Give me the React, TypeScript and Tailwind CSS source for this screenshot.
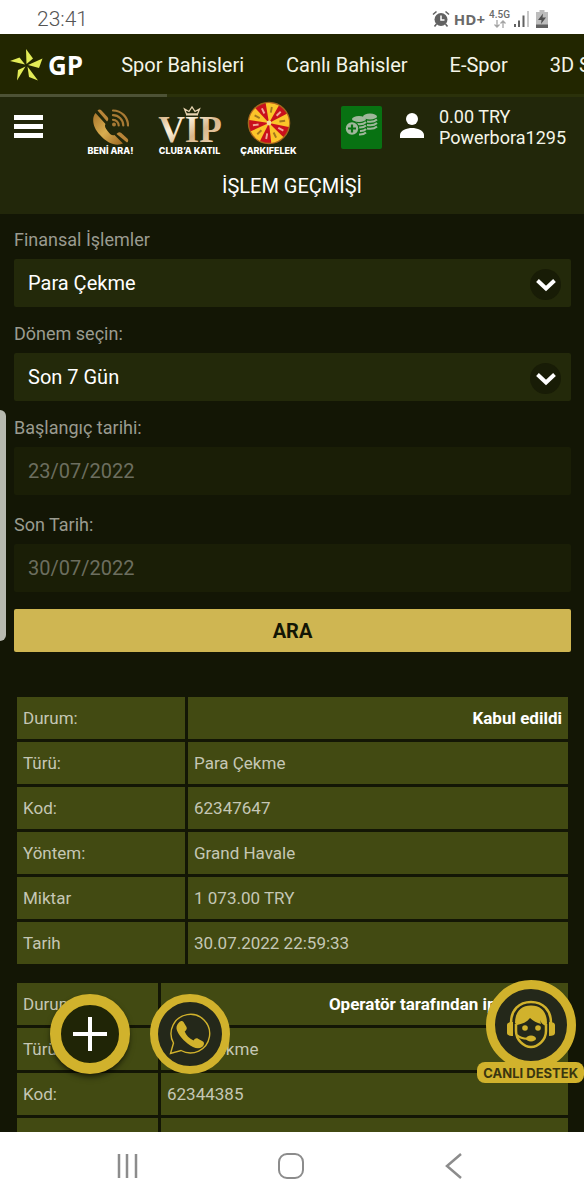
import { useState } from "react";
import type { ReactNode } from "react";

type Row = { label: string; value: string; status?: boolean };

const first: Row[] = [
  { label: "Durum:", value: "Kabul edildi", status: true },
  { label: "Türü:", value: "Para Çekme" },
  { label: "Kod:", value: "62347647" },
  { label: "Yöntem:", value: "Grand Havale" },
  { label: "Miktar", value: "1 073.00 TRY" },
  { label: "Tarih", value: "30.07.2022 22:59:33" },
];

const second: Row[] = [
  { label: "Durum:", value: "Operatör tarafından iptal edildi", status: true },
  { label: "Türü:", value: "Para Çekme" },
  { label: "Kod:", value: "62344385" },
  { label: "Yöntem:", value: "Grand Havale" },
];

const wheel = Array.from({ length: 10 }, (_, i) => i);

function StatusBar() {
  return (
    <div className="flex h-[34px] shrink-0 items-center bg-white pt-1 pr-9 pl-[37px] text-[#6a6a6a]">
      <span className="text-[21px] leading-6 font-light text-[#555]">23:41</span>
      <div className="ml-auto flex items-center">
        <svg width="18" height="18" viewBox="0 0 18 18" fill="none" stroke="#626262">
          <circle cx="9" cy="9.500" r="6.500" fill="#626262" stroke="none" />
          <path d="M1 4.500 4.500 1.500M17 4.500l-3.500-3M4.500 14 2.500 16.500M13.500 14l2 2.500" strokeWidth="1.600" />
          <path d="M9 5.500v4.500h3.500" stroke="#fff" strokeWidth="1.500" />
        </svg>
        <span className="ml-1 font-['Open_Sans'] text-[15px] leading-4 font-bold">HD+</span>
        <div className="ml-1 flex flex-col items-center">
          <span className="text-[10px] leading-[10px] font-medium">4.5G</span>
          <svg width="12" height="8" viewBox="0 0 12 8" fill="none" stroke="#a5a5a5" strokeWidth="1.300">
            <path d="M3 0v7M.5 4.500 3 7l2.500-2.500M9 8V1M6.500 3.500 9 1l2.500 2.500" />
          </svg>
        </div>
        <svg className="ml-1" width="16" height="17" viewBox="0 0 16 17">
          <path d="M0 13h2v3H0zM4 9.500h2V16H4zM8.500 4.500h2V16h-2z" fill="#626262" />
          <path d="M13 0h2v16h-2z" fill="#c9c9c9" />
        </svg>
        <svg className="ml-1.5" width="12" height="18" viewBox="0 0 12 18">
          <path d="M3.500 0h5v2H12v16H0V2h3.500z" fill="#bdbdbd" />
          <path d="M0 14.500h12V18H0z" fill="#626262" />
          <path d="M7 3.500 2 10h3.500L5 14l5-6.500H6.500z" fill="#505050" />
        </svg>
      </div>
    </div>
  );
}

function Logo() {
  return (
    <a href="#" className="flex shrink-0 items-center" aria-label="GP">
      <svg width="33" height="32" viewBox="0 0 33 32">
        <g fill="#e3ec57">
          <path d="M16.500 15 16 0l7 9.500z" />
          <path d="M18 16 32.500 9.500 29 19z" />
          <path d="M17.500 17.500 28 31.500l-9-3.500z" />
          <path d="M15.500 17.500 7 31.500 8 21z" />
          <path d="M15 15.500 0 12l9.500-3.500z" />
        </g>
      </svg>
      <span className="ml-[5px] font-['Open_Sans'] text-[26px] leading-8 font-bold text-white">GP</span>
    </a>
  );
}

function CallIcon() {
  return (
    <svg width="36" height="36" viewBox="0 0 36 36" fill="none">
      <defs>
        <linearGradient id="gold" x1="0" y1="0" x2="1" y2="1">
          <stop offset="0" stopColor="#a8742a" />
          <stop offset=".5" stopColor="#d9ae50" />
          <stop offset="1" stopColor="#9a6520" />
        </linearGradient>
      </defs>
      <path d="M2.500 4C-1.500 9-.5 18 7 26c7.500 8.500 16 11.500 23 8.500L21.500 26c-2.500 1-4.500-1-6.500-3.500s-4-5-2.500-7.500z" fill="url(#gold)" />
      <path d="M4.500 1.500c1.200-1.200 2.800-1.200 4 0l6 6.500c1.200 1.500 1 3-.5 4.500z" fill="#b98538" />
      <path d="m23.500 25 1-1c1.200-1 2.500-1 3.800 0l6 5.500c1.300 1.300 1.200 3-.3 4z" fill="#b98538" />
      <g stroke="#a87a34" strokeWidth="2.200" strokeLinecap="round">
        <path d="M20 1.500A15 15 0 0 1 35 16.500M20 6.200a10.300 10.300 0 0 1 10.300 10.300M20 10.800a5.700 5.700 0 0 1 5.700 5.700" />
      </g>
      <circle cx="21" cy="15.500" r="2" fill="#a87a34" />
    </svg>
  );
}

function VipIcon() {
  return (
    <svg width="64" height="38" viewBox="0 0 64 38" className="overflow-visible">
      <defs>
        <linearGradient id="vip" x1="0" y1="0" x2="1" y2="1">
          <stop offset="0" stopColor="#c79a63" />
          <stop offset=".35" stopColor="#fdf1dc" />
          <stop offset=".6" stopColor="#d9b78c" />
          <stop offset="1" stopColor="#f3dfc0" />
        </linearGradient>
      </defs>
      <path d="m28.500 7-2-5 4.500 2.500L34 0l3 4.500L41.500 2l-2 5z" fill="none" stroke="#e8d3b0" strokeWidth="1.300" />
      <path d="M28 7h12v1.500H28z" fill="#e8d3b0" />
      <text x="32" y="35" textAnchor="middle" fontFamily="Liberation Serif, serif" fontWeight="700" fontSize="37" fill="url(#vip)">
        VIP
      </text>
    </svg>
  );
}

function WheelIcon() {
  return (
    <svg width="46" height="46" viewBox="-23 -23 46 46">
      <circle r="21.500" fill="#c9101c" stroke="#a3661d" strokeWidth="1.500" />
      {wheel.map((i) => (
        <g key={i} transform={`rotate(${i * 36 + 10})`}>
          {i % 2 === 0 && <path d="M0 0-7-19.800A21 21 0 0 1 7-19.800z" fill="#fbc52a" />}
          <path d="M0-17v6" stroke={i % 2 ? "#f0a898" : "#a3781c"} strokeWidth="2" />
        </g>
      ))}
      <circle r="2.500" fill="#f4d9a0" />
    </svg>
  );
}

function CoinsIcon() {
  return (
    <svg width="33" height="24" viewBox="0 0 33 24">
      <g fill="#9fb79b">
        <ellipse cx="25" cy="3.500" rx="7" ry="3" />
        <ellipse cx="14" cy="6" rx="7" ry="3" />
      </g>
      <g fill="none" stroke="#9fb79b" strokeWidth="2">
        <path d="M22 8.500c4 .8 8-.2 10-2M22 12c4 .8 8-.2 10-2M22 15.500c4 .8 8-.2 10-2" />
        <path d="M10 10.500c5 1.500 9 .5 11-1.500M14 14.500c3 .2 5.500-.6 7-2M15 18c3 .2 4.800-.6 6-2M14 21.500c3 .2 5.500-.6 7-2" />
      </g>
      <circle cx="7" cy="15.500" r="7.300" fill="#087212" />
      <circle cx="7" cy="15.500" r="6.200" fill="#9fb79b" />
      <path d="M7 11.500v8M3 15.500h8" stroke="#087212" strokeWidth="2.200" />
    </svg>
  );
}

function Promo({ icon, label }: { icon: ReactNode; label: string }) {
  return (
    <a href="#" className="flex h-[55px] w-[79px] flex-col items-center justify-end whitespace-nowrap">
      {icon}
      <span className="mt-px font-['Inter'] text-[9px] leading-[10px] font-extrabold text-white">{label}</span>
    </a>
  );
}

function SelectField({ id, label, options }: { id: string; label: string; options: string[] }) {
  return (
    <div>
      <label htmlFor={id} className="mb-[5px] block text-[18px] leading-7 text-[#9a9b90]">{label}</label>
      <div className="relative">
        <select id={id} className="block h-12 w-full appearance-none rounded-xs bg-[#23290a] px-3.5 text-xl text-white">
          {options.map((o) => (
            <option key={o}>{o}</option>
          ))}
        </select>
        <span className="pointer-events-none absolute top-2.5 right-2.5 flex size-[31px] items-center justify-center rounded-full bg-[#181c06]">
          <svg width="20" height="14" viewBox="0 0 20 14" fill="none" stroke="#fff" strokeWidth="4">
            <path d="m1.500 2.500 8.500 8 8.500-8" />
          </svg>
        </span>
      </div>
    </div>
  );
}

function DateField({ id, label, value }: { id: string; label: string; value: string }) {
  return (
    <div>
      <label htmlFor={id} className="mb-[5px] block text-[18px] leading-7 text-[#9a9b90]">{label}</label>
      <input id={id} type="text" value={value} disabled className="block h-12 w-full rounded-xs bg-[#1a1e06] px-3.5 text-xl text-[#6c6e5f]" />
    </div>
  );
}

function Transaction({ rows, narrow }: { rows: Row[]; narrow?: boolean }) {
  return (
    <table className="w-full table-fixed border-separate border-spacing-[3px] text-[17px] leading-5 text-[#c5c7b5]">
      <tbody>
        {rows.map((r) => (
          <tr key={r.label} className="h-[42px]">
            <th scope="row" className={`bg-[#424a12] px-1.5 text-left font-normal ${narrow ? "w-[141px]" : "w-[168px]"}`}>{r.label}</th>
            <td className={r.status ? "bg-[#424a12] px-1.5 text-right font-bold whitespace-nowrap text-white" : "bg-[#424a12] px-1.5"}>{r.value}</td>
          </tr>
        ))}
      </tbody>
    </table>
  );
}

function SupportButton() {
  return (
    <button type="button" className="absolute right-0 bottom-[49px] flex flex-col items-center">
      <span className="flex size-[90px] items-center justify-center rounded-full border-[9px] border-[#d1b22c] bg-[#24281a]">
        <svg width="50" height="50" viewBox="0 0 50 50" fill="none">
          <path d="M5 23C5 10 13 2 25 2s20 8 20 21" stroke="#d1b22c" strokeWidth="2.500" />
          <path d="M1 25c0-2 2-3 6-3v14c-4 0-6-1-6-3zM49 25c0-2-2-3-6-3v14c4 0 6-1 6-3z" fill="#d1b22c" />
          <path d="M9 23C9 12 15 5.500 25 5.500S41 12 41 23l-1 3c-3-1-5-3-6-6l1 4c-4-1-8-3-11-6-3 4-8 6-13 7z" fill="#d1b22c" />
          <path d="M10 24v7c0 9 8 16 15 16s15-7 15-16v-7" stroke="#d1b22c" strokeWidth="2.500" />
          <circle cx="19" cy="28" r="2.800" fill="#d1b22c" />
          <circle cx="32" cy="28" r="2.800" fill="#d1b22c" />
          <path d="M11 35c3 3 8 4 13 3.500" stroke="#d1b22c" strokeWidth="2" />
          <ellipse cx="25" cy="38.500" rx="5" ry="3" fill="#d1b22c" />
        </svg>
      </span>
      <span className="relative -mt-2 flex h-[21px] items-center rounded-lg bg-[#d1b22c] px-1.5 font-['Inter'] text-[13px] leading-4 font-bold whitespace-nowrap text-[#3a360f]">
        CANLI DESTEK
      </span>
    </button>
  );
}

export default function App() {
  const [open, setOpen] = useState(false);

  return (
    <div className="relative flex h-screen flex-col overflow-hidden bg-[#131605] font-['Roboto',sans-serif]">
      <StatusBar />

      <nav className="flex h-[63px] shrink-0 flex-col overflow-hidden bg-[#222600]">
        <div className="flex flex-1 items-center gap-[42px] pt-0.5 pl-2.5 text-xl whitespace-nowrap text-[#f4f5e8]">
          <div className="-mr-1">
            <Logo />
          </div>
          <a href="#">Spor Bahisleri</a>
          <a href="#">Canlı Bahisler</a>
          <a href="#">E-Spor</a>
          <a href="#">3D Sporlar</a>
        </div>
        <div className="h-[3px] bg-[#2b310a]">
          <div className="h-full w-[167px] bg-[#4d5235]" />
        </div>
      </nav>

      <header className="shrink-0 bg-[#22270a]">
        <div className="flex h-[63px] items-start pt-1 pr-[18px] pl-3.5">
          <button type="button" aria-label="Menü" aria-expanded={open} onClick={() => setOpen(!open)} className="mt-3.5 flex w-[29px] flex-col gap-1">
            <span className="h-[5px] bg-white" />
            <span className="h-[5px] bg-white" />
            <span className="h-[5px] bg-white" />
          </button>
          <div className="ml-7 flex items-start">
            <Promo icon={<CallIcon />} label="BENİ ARA!" />
            <Promo icon={<VipIcon />} label="CLUB’A KATIL" />
            <Promo icon={<WheelIcon />} label="ÇARKIFELEK" />
          </div>
          <div className="ml-auto flex items-start">
            <button type="button" aria-label="Para yatır" className="mt-[5px] flex h-[43px] w-[41px] justify-center rounded-xs bg-[#087212] pt-[7px]">
              <CoinsIcon />
            </button>
            <svg className="mt-3 ml-[18px]" width="24" height="25" viewBox="0 0 24 25" fill="#fff">
              <circle cx="12" cy="6" r="6" />
              <path d="M0 25v-3c0-4.500 7-7 12-7s12 2.500 12 7v3z" />
            </svg>
            <div className="mt-[5px] ml-[15px] text-[18px] leading-[21px] text-[#f4f5e8]">
              <div>0.00 TRY</div>
              <div>Powerbora1295</div>
            </div>
          </div>
        </div>
        <h1 className="h-[54px] pt-3 text-center text-[20px] leading-7 text-white">İŞLEM GEÇMİŞİ</h1>
      </header>

      <main className="relative min-h-0 flex-1 overflow-hidden pt-3 pr-[13px] pl-3.5">
        <form onSubmit={(e) => e.preventDefault()}>
          <div className="flex flex-col gap-[13px]">
            <SelectField id="kind" label="Finansal İşlemler" options={["Para Çekme", "Para Yatırma"]} />
            <SelectField id="period" label="Dönem seçin:" options={["Son 7 Gün", "Son 30 Gün"]} />
            <DateField id="from" label="Başlangıç tarihi:" value="23/07/2022" />
          </div>
          <div className="mt-4">
            <DateField id="to" label="Son Tarih:" value="30/07/2022" />
          </div>
          <button type="submit" className="mt-[17px] h-[43px] w-full rounded-xs bg-[#cfb652] text-xl font-bold text-[#131605]">ARA</button>
        </form>

        <div className="mt-[42px] flex flex-col gap-[13px]">
          <Transaction rows={first} />
          <Transaction rows={second} narrow />
        </div>

        <button type="button" aria-label="Ekle" className="absolute bottom-[58px] left-[50px] flex size-20 items-center justify-center rounded-full border-[11px] border-[#d1b22c] bg-[#202506] shadow-md shadow-black/50">
          <svg width="34" height="34" viewBox="0 0 34 34" stroke="#fff" strokeWidth="4">
            <path d="M17 0v34M0 17h34" />
          </svg>
        </button>
        <a href="#" aria-label="WhatsApp" className="absolute bottom-[58px] left-[150px] flex size-20 items-center justify-center rounded-full border-8 border-[#d1b22c] bg-[#24281a]">
          <svg width="42" height="42" viewBox="0 0 42 42" fill="none">
            <path d="M4.500 30A19.300 19.300 0 1 1 12 37.500L1.500 40.500z" stroke="#d1b22c" strokeWidth="1.400" />
            <path d="M10 9.500c1.500-2 3.500-2 4.500-.5l3 5c.8 1.500 0 3-1.800 4.500 1.500 4 4.500 7 8.800 9 1.500-2 3-2.700 4.500-1.800l5 2.800c1.800 1.200 1 4-1 5.500-3.500 2.500-9 1-14.500-3.500S8 20 7.500 15.500c-.2-2.300.8-4.300 2.500-6z" fill="#d1b22c" />
          </svg>
        </a>
        <SupportButton />
      </main>

      <div className="absolute top-[410px] left-0 h-[231px] w-[6px] rounded-r-md bg-[#b7b9b0]" />

      <footer className="flex h-[68px] shrink-0 items-center justify-between bg-white px-[116px]">
        <button type="button" aria-label="Son uygulamalar">
          <svg width="22" height="26" viewBox="0 0 22 26" stroke="#8c8c8c" strokeWidth="2.500">
            <path d="M3 1v24M11 1v24M20 1v24" />
          </svg>
        </button>
        <button type="button" aria-label="Ana ekran">
          <svg width="26" height="26" viewBox="0 0 26 26" fill="none" stroke="#8c8c8c" strokeWidth="2">
            <rect x="1" y="1" width="24" height="24" rx="8" />
          </svg>
        </button>
        <button type="button" aria-label="Geri">
          <svg width="24" height="26" viewBox="0 0 24 26" fill="none" stroke="#8c8c8c" strokeWidth="2.500">
            <path d="M17 1 3 13l14 12" />
          </svg>
        </button>
      </footer>
    </div>
  );
}
